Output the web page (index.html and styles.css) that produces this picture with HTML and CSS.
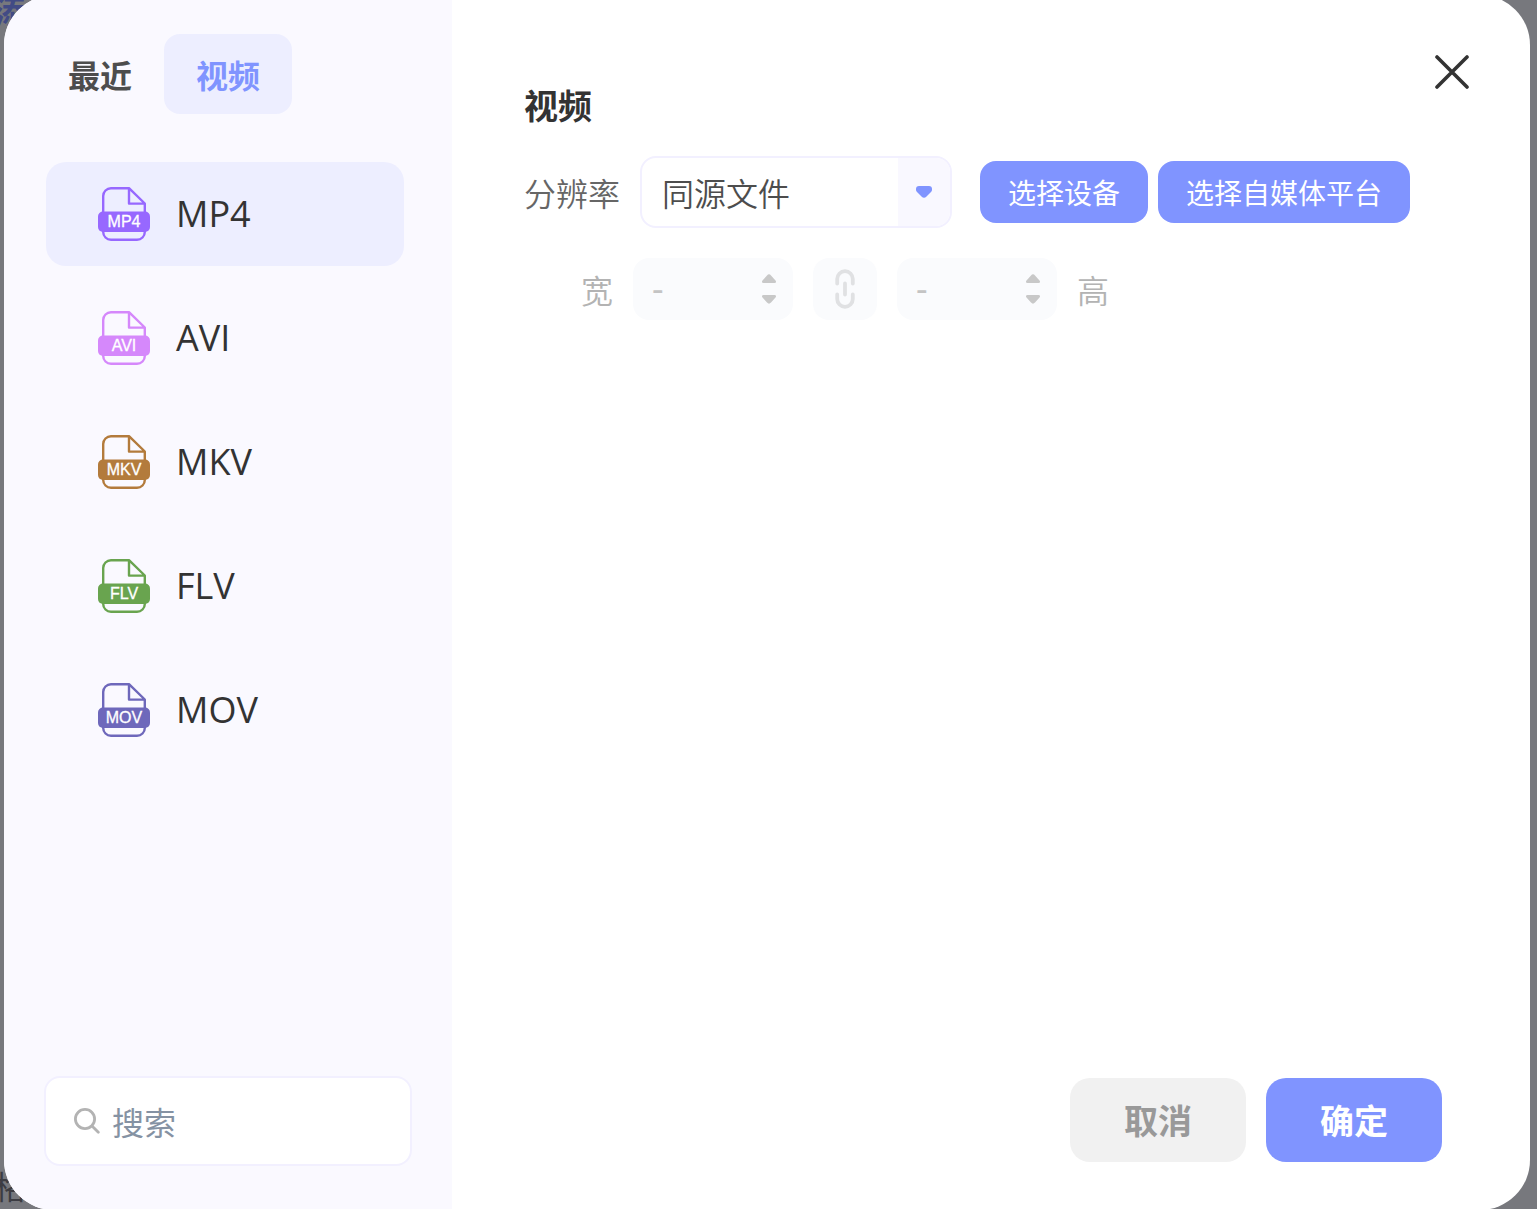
FILE: index.html
```html
<!DOCTYPE html>
<html lang="zh-CN">

<head>
    <meta charset="utf-8">
    <meta name="viewport" content="width=device-width, initial-scale=1.0">
    <title>视频</title>
    <link rel="stylesheet" href="styles.css">
</head>

<body>
    <!-- Page behind the dialog -->
    <div class="backdrop" aria-hidden="true">
        <span class="backdrop-add">添</span>
        <span class="backdrop-format">格</span>
    </div>

    <!-- Shared file outline -->
    <svg class="symbols" aria-hidden="true">
        <symbol id="file" viewBox="0 0 52 54">
            <path d="M31 1.2H13a7.8 7.8 0 0 0-7.8 7.8v36a7.8 7.8 0 0 0 7.8 7.8h26a7.8 7.8 0 0 0 7.8-7.8V16.5L31 1.2V16.6H46.8" fill="none" stroke="currentColor" stroke-width="2.4" stroke-linejoin="round" />
            <rect y="24.5" width="52" height="20.5" rx="5" fill="currentColor" />
        </symbol>
    </svg>

    <div class="dialog" role="dialog" aria-labelledby="title">
        <aside class="sidebar">
            <nav class="tabs">
                <button class="tab" type="button">最近</button>
                <button class="tab active" type="button">视频</button>
            </nav>

            <ul class="formats">
                <li><button class="format active" type="button">
                    <svg class="format-icon mp4" viewBox="0 0 52 54"><use href="#file" /><text x="26" y="40">MP4</text></svg>
                    <span>MP4</span>
                </button></li>
                <li><button class="format" type="button">
                    <svg class="format-icon avi" viewBox="0 0 52 54"><use href="#file" /><text x="26" y="40">AVI</text></svg>
                    <span>AVI</span>
                </button></li>
                <li><button class="format" type="button">
                    <svg class="format-icon mkv" viewBox="0 0 52 54"><use href="#file" /><text x="26" y="40">MKV</text></svg>
                    <span>MKV</span>
                </button></li>
                <li><button class="format" type="button">
                    <svg class="format-icon flv" viewBox="0 0 52 54"><use href="#file" /><text x="26" y="40">FLV</text></svg>
                    <span>FLV</span>
                </button></li>
                <li><button class="format" type="button">
                    <svg class="format-icon mov" viewBox="0 0 52 54"><use href="#file" /><text x="26" y="40">MOV</text></svg>
                    <span>MOV</span>
                </button></li>
            </ul>

            <label class="search">
                <svg class="search-icon" viewBox="0 0 26 26"><circle cx="11" cy="11" r="9.6" /><path d="M18 18l6.3 6.3" /></svg>
                <input type="text" placeholder="搜索" aria-label="搜索">
            </label>
        </aside>

        <main class="content">
            <header class="content-header">
                <h1 id="title">视频</h1>
                <button class="close" type="button" aria-label="关闭">
                    <svg viewBox="0 0 34 34"><path d="M2 2l30 30M32 2L2 32" /></svg>
                </button>
            </header>

            <div class="row">
                <label class="label" for="resolution">分辨率</label>
                <div class="select">
                    <select id="resolution">
                        <option>同源文件</option>
                    </select>
                    <span class="select-arrow">
                        <svg viewBox="0 0 16 12"><path d="M3 0h10q3 0 3 3v1q0 1-1 2l-4.500 4.500q-2.500 2.500-5 0L1 6Q0 5 0 4V3Q0 0 3 0z" /></svg>
                    </span>
                </div>
                <div class="pickers">
                    <button class="picker" type="button">选择设备</button>
                    <button class="picker" type="button">选择自媒体平台</button>
                </div>
            </div>

            <div class="row size-row">
                <label class="label size-label" for="width">宽</label>
                <div class="number">
                    <input id="width" type="text" value="-" disabled>
                    <span class="steps">
                        <button type="button" aria-label="增加宽" disabled><svg viewBox="0 0 14 9"><path d="M1.500 9h11q2.500-.5 1-2.500L9 1.500Q7-.8 5 1.500L.5 6.500Q-1 8.500 1.500 9z" /></svg></button>
                        <button type="button" aria-label="减少宽" disabled><svg viewBox="0 0 14 9"><path d="M1.500 0h11q2.500.5 1 2.500L9 7.500Q7 9.800 5 7.500L.5 2.500Q-1 .5 1.500 0z" /></svg></button>
                    </span>
                </div>
                <button class="link" type="button" aria-label="锁定比例" disabled>
                    <svg viewBox="0 0 20 40"><path d="M2.200 14.500V10a7.800 7.800 0 0 1 15.600 0v4.500M10 14.500v11M2.200 25.500V30a7.800 7.800 0 0 0 15.600 0v-4.500" /></svg>
                </button>
                <div class="number">
                    <input id="height" type="text" value="-" disabled>
                    <span class="steps">
                        <button type="button" aria-label="增加高" disabled><svg viewBox="0 0 14 9"><path d="M1.500 9h11q2.500-.5 1-2.500L9 1.500Q7-.8 5 1.500L.5 6.500Q-1 8.500 1.500 9z" /></svg></button>
                        <button type="button" aria-label="减少高" disabled><svg viewBox="0 0 14 9"><path d="M1.500 0h11q2.500.5 1 2.500L9 7.500Q7 9.800 5 7.500L.5 2.500Q-1 .5 1.500 0z" /></svg></button>
                    </span>
                </div>
                <label class="label" for="height">高</label>
            </div>

            <footer class="actions">
                <button class="action" type="button">取消</button>
                <button class="action confirm" type="button">确定</button>
            </footer>
        </main>
    </div>
</body>

</html>
```

FILE: styles.css
```css
* {
    box-sizing: border-box;
}

body {
    margin: 0;
    height: 100vh;
    overflow: hidden;
    display: flex;
    background: #77787d;
    color: #333;
    font-family: "Open Sans", "Noto Sans CJK SC", sans-serif;
    font-size: 32px;
    line-height: 48px;
}

button,
input,
select {
    margin: 0;
    padding: 0;
    border: none;
    background: none;
    color: inherit;
    font: inherit;
}

button {
    cursor: pointer;
}

svg {
    display: block;
}

.symbols {
    position: absolute;
    width: 0;
    height: 0;
}

/* Page behind the dialog */
.backdrop span {
    position: absolute;
    font-family: "Noto Sans CJK SC", sans-serif;
}

.backdrop-add {
    top: -14px;
    left: -6px;
    color: #424b85;
    font-weight: bold;
}

.backdrop-format {
    bottom: 0;
    left: -6px;
    color: #3c3c42;
}

/* Dialog */
.dialog {
    position: relative;
    flex: 1;
    display: grid;
    grid-template-columns: 448px 1fr;
    margin: -5px 7px -1px 4px;
    border-radius: 50px;
    overflow: hidden;
    background: #fff;
}

/* Sidebar */
.sidebar {
    display: flex;
    flex-direction: column;
    padding: 39px 40px 44px;
    background: #faf9ff;
}

.tabs {
    display: flex;
    margin: 0 -8px 48px;
}

.tab {
    height: 80px;
    padding: 0 32px;
    border-radius: 16px;
    color: #4d4d4d;
    font-family: "Noto Sans CJK SC", sans-serif;
    font-weight: bold;
}

.tab.active {
    background: #edeeff;
    color: #8094ff;
}

.formats {
    display: flex;
    flex-direction: column;
    gap: 20px;
    margin: 0 8px 0 2px;
    padding: 0;
    list-style: none;
}

.format {
    display: flex;
    align-items: center;
    gap: 26px;
    width: 100%;
    height: 104px;
    padding: 0 52px;
    border-radius: 20px;
    font-size: 36px;
}

.format.active {
    background: #edeeff;
}

.format-icon {
    width: 52px;
    height: 54px;
}

.format-icon text {
    fill: #fff;
    stroke: #fff;
    stroke-width: 0.3;
    font-family: "Liberation Sans", Arial, sans-serif;
    font-size: 16px;
    text-anchor: middle;
}

.mp4 {
    color: #9768ff;
}

.avi {
    color: #d588fb;
}

.mkv {
    color: #b37b3c;
}

.flv {
    color: #69a44f;
}

.mov {
    color: #6e68bb;
}

.search {
    display: flex;
    align-items: center;
    gap: 12px;
    height: 90px;
    margin-top: auto;
    padding: 0 28px;
    border: 2px solid #f2f0ff;
    border-radius: 16px;
    background: #fff;
}

.search-icon {
    flex: none;
    width: 26px;
    height: 26px;
    fill: none;
    stroke: #b3b3b3;
    stroke-width: 2.8;
    stroke-linecap: round;
}

.search input {
    flex: 1;
    min-width: 0;
    height: 48px;
    font-family: "Noto Sans CJK SC", sans-serif;
}

.search input::placeholder {
    color: #8592a3;
    opacity: 1;
}

/* Content */
.content {
    display: flex;
    flex-direction: column;
    padding: 60px 88px 48px 72px;
}

.content-header {
    display: flex;
    justify-content: space-between;
    align-items: flex-end;
    height: 74px;
    margin: 0 -27px 27px 0;
}

.content-header h1 {
    margin: 0;
    font-family: "Noto Sans CJK SC", sans-serif;
    font-size: 34px;
}

.close {
    align-self: flex-start;
}

.close svg {
    width: 34px;
    height: 34px;
    stroke: #333;
    stroke-width: 3.6;
    stroke-linecap: round;
}

.row {
    display: flex;
    align-items: center;
    gap: 20px;
    margin-bottom: 30px;
}

.label {
    color: #666;
    font-family: "Noto Sans CJK SC", sans-serif;
    font-weight: 350;
}

.select {
    position: relative;
    width: 312px;
    height: 72px;
    border: 2px solid #f2f0ff;
    border-radius: 16px;
    overflow: hidden;
}

.select select {
    width: 100%;
    height: 100%;
    padding: 0 72px 0 20px;
    appearance: none;
    color: #4d4d4d;
    font-family: "Noto Sans CJK SC", sans-serif;
    font-weight: 350;
}

.select-arrow {
    position: absolute;
    top: 0;
    right: 0;
    bottom: 0;
    display: flex;
    align-items: center;
    justify-content: center;
    width: 52px;
    background: #f9f8ff;
    pointer-events: none;
}

.select-arrow svg {
    width: 16px;
    height: 12px;
    fill: #8094ff;
}

.pickers {
    display: flex;
    gap: 10px;
    margin-left: 8px;
}

.picker {
    height: 62px;
    padding: 0 28px;
    border-radius: 16px;
    background: #8094ff;
    color: #fff;
    font-family: "Noto Sans CJK SC", sans-serif;
    font-size: 28px;
    white-space: nowrap;
}

/* Width and height */
.size-row .label {
    color: #b3b3b3;
}

.size-label {
    padding-left: 57px;
}

.number {
    display: flex;
    align-items: center;
    width: 160px;
    height: 62px;
    padding: 0 17px 0 19px;
    border-radius: 16px;
    background: #fafbfd;
}

.number input {
    flex: 1;
    min-width: 0;
    color: #c4c4c4;
    font-size: 36px;
}

.steps {
    display: flex;
    flex-direction: column;
    gap: 12px;
}

.steps svg {
    width: 14px;
    height: 9px;
    fill: #c8c8c8;
}

.link {
    display: flex;
    align-items: center;
    justify-content: center;
    width: 64px;
    height: 62px;
    border-radius: 16px;
    background: #fafbfd;
}

.link svg {
    width: 20px;
    height: 40px;
    fill: none;
    stroke: #e0e1e3;
    stroke-width: 3.8;
    stroke-linecap: round;
}

/* Footer */
.actions {
    display: flex;
    justify-content: flex-end;
    gap: 20px;
    margin-top: auto;
}

.action {
    width: 176px;
    height: 84px;
    border-radius: 20px;
    background: #f1f1f1;
    color: #999;
    font-family: "Noto Sans CJK SC", sans-serif;
    font-size: 34px;
    font-weight: bold;
}

.confirm {
    background: #8094ff;
    color: #fff;
}
```
